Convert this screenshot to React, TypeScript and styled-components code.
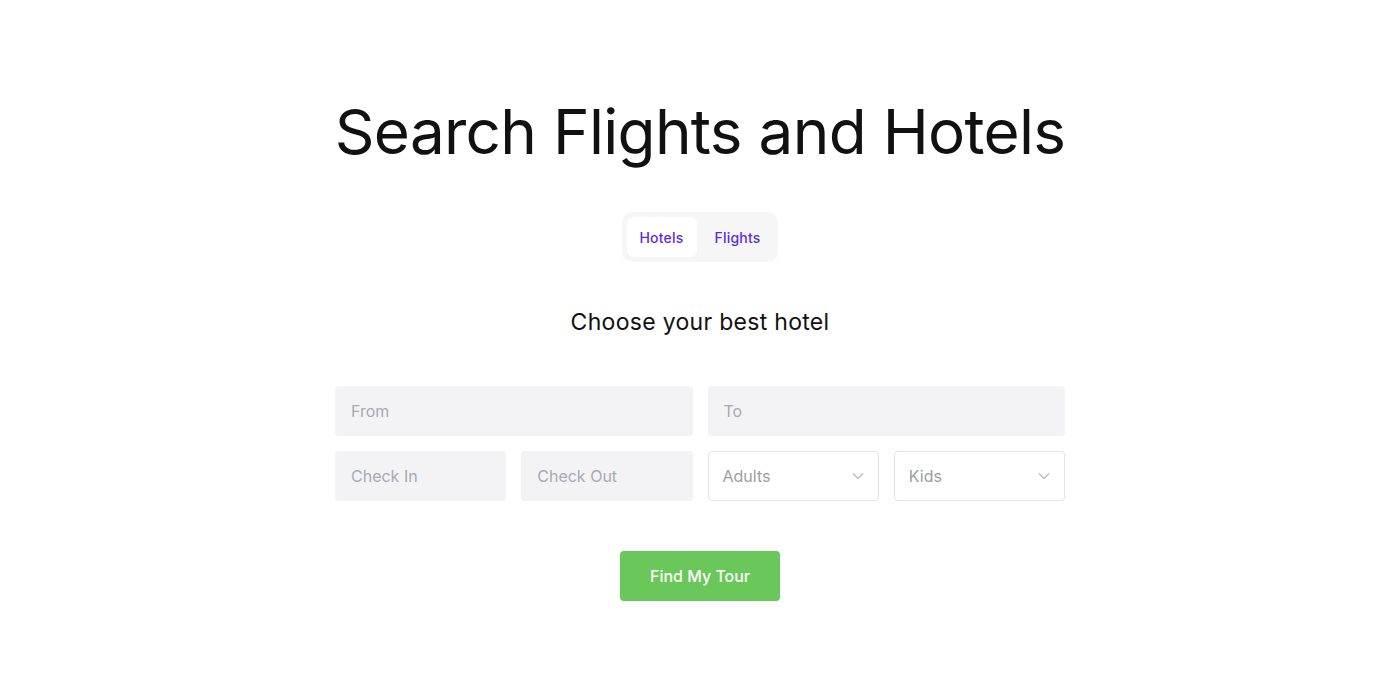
import React from "react";
import styled, { createGlobalStyle } from "styled-components";

const Global = createGlobalStyle`
  html, body { margin: 0; padding: 0; background: #fff; }
  body { font-family: "Inter", "Open Sans", sans-serif; }
  * { box-sizing: border-box; }
`;

const Page = styled.div`
  width: 1400px;
  height: 700px;
  display: flex;
  flex-direction: column;
  align-items: center;
  padding-top: 92px;
`;

const Title = styled.h1`
  margin: 0;
  font-weight: 400;
  font-size: 62px;
  line-height: 80px;
  letter-spacing: -0.7px;
  color: #111;
`;

const Tabs = styled.div`
  margin-top: 40px;
  display: flex;
  padding: 5px;
  gap: 5px;
  background: #f6f6f7;
  border-radius: 10px;
`;

const Tab = styled.button<{ $active?: boolean }>`
  border: none;
  font-family: inherit;
  font-size: 14px;
  font-weight: 500;
  letter-spacing: 0.2px;
  color: #5a2de0;
  background: ${(p) => (p.$active ? "#fff" : "transparent")};
  border-radius: 7px;
  height: 40px;
  padding: 0 13px;
  cursor: pointer;
`;

const Subtitle = styled.h2`
  margin: 44px 0 0;
  font-weight: 400;
  font-size: 23px;
  line-height: 32px;
  color: #111;
  letter-spacing: 0.3px;
`;

const Form = styled.div`
  margin-top: 48px;
  width: 730px;
  display: grid;
  grid-template-columns: repeat(4, minmax(0, 1fr));
  gap: 15px;
`;

const Input = styled.input<{ $span?: number }>`
  grid-column: span ${(p) => p.$span ?? 1};
  width: 100%;
  min-width: 0;
  height: 50px;
  border: none;
  border-radius: 4px;
  background: #f3f3f5;
  padding: 0 16px;
  font-family: inherit;
  font-size: 16px;
  color: #333;
  outline: none;
  &::placeholder { color: #a8a9b4; }
`;

const Select = styled.div`
  height: 50px;
  min-width: 0;
  border: 1px solid #e3e3ea;
  border-radius: 4px;
  background: #fff;
  display: flex;
  align-items: center;
  justify-content: space-between;
  padding: 0 14px 0 14px;
  font-size: 16px;
  color: #9d9d9d;
`;

const Button = styled.button`
  margin-top: 50px;
  width: 160px;
  height: 50px;
  border: none;
  border-radius: 4px;
  background: #6ac85a;
  color: #fff;
  font-family: inherit;
  font-size: 16px;
  font-weight: 500;
  cursor: pointer;
`;

const Chevron = () => (
  <svg width="12" height="8" viewBox="0 0 12 8" fill="none">
    <path d="M1 1.5 6 6.5 11 1.5" stroke="#b5b5b5" strokeWidth="1.2" />
  </svg>
);

export default function App() {
  return (
    <>
      <Global />
      <Page>
        <Title>Search Flights and Hotels</Title>
        <Tabs>
          <Tab $active>Hotels</Tab>
          <Tab>Flights</Tab>
        </Tabs>
        <Subtitle>Choose your best hotel</Subtitle>
        <Form>
          <Input $span={2} placeholder="From" />
          <Input $span={2} placeholder="To" />
          <Input placeholder="Check In" />
          <Input placeholder="Check Out" />
          <Select>
            Adults
            <Chevron />
          </Select>
          <Select>
            Kids
            <Chevron />
          </Select>
        </Form>
        <Button>Find My Tour</Button>
      </Page>
    </>
  );
}
